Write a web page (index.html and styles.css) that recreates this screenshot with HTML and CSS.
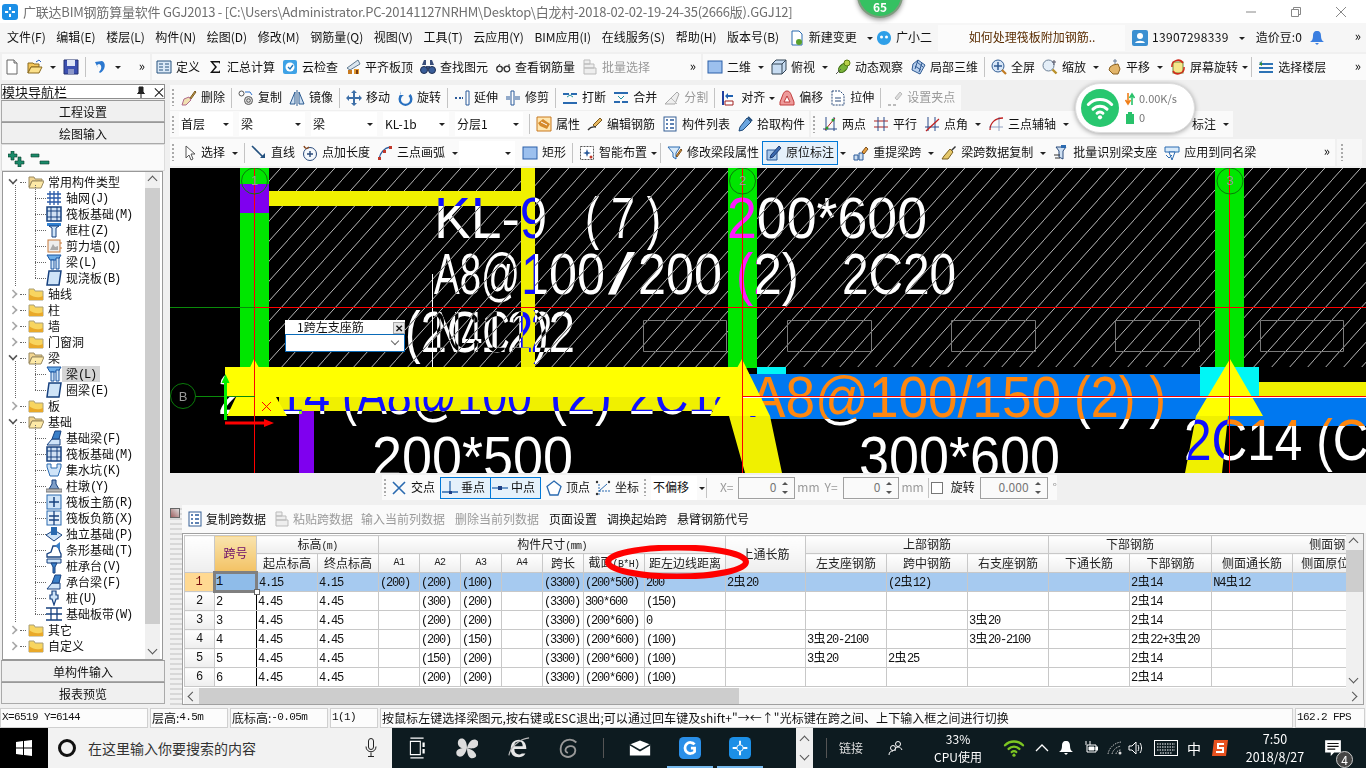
FILE: index.html
```html
<!DOCTYPE html>
<html lang="zh-CN">
<head>
<meta charset="utf-8">
<title>GGJ2013</title>
<link rel="stylesheet" href="styles.css">
</head>
<body>
<svg class="sprite" aria-hidden="true">
<defs>
<symbol id="new" viewBox="0 0 16 16"><path d="M3 1h7l3 3v11H3z" fill="#fff" stroke="#666"/><path d="M10 1v3h3" fill="#ddd" stroke="#666"/></symbol>
<symbol id="open" viewBox="0 0 16 16"><path d="M1 14V4h5l1 1h5v3H4z" fill="#f3c65a" stroke="#8a6a20"/><path d="M1 14l3-6h11l-3 6z" fill="#fbe08a" stroke="#8a6a20"/><path d="M9 3l3-2 2 2" fill="none" stroke="#2a62c0"/></symbol>
<symbol id="save" viewBox="0 0 16 16"><path d="M1 1h14v14H1z" fill="#3b4fb0" stroke="#23306f"/><path d="M4 1h8v6H4z" fill="#dfe6f6"/><path d="M5 10h6v5H5z" fill="#8c97c8"/></symbol>
<symbol id="undo" viewBox="0 0 16 16"><path d="M3 3l7-1c4 1 4 9-2 12l-1-1c3-3 3-7 0-8L5 6l1 3z" fill="#2b78d0"/></symbol>
<symbol id="def" viewBox="0 0 16 16"><path d="M1 2h14v12H1z" fill="#dbe9f7" stroke="#27537f"/><path d="M3 5h4M3 8h4M3 11h4M9 5h4M9 8h4M9 11h4" stroke="#27537f"/></symbol>
<symbol id="sigma" viewBox="0 0 16 16"><path d="M3 2h10v3l-1-1.500H6L10 8l-4 4.500h6L13 11v3H3l5-6z" fill="#111"/></symbol>
<symbol id="cloud" viewBox="0 0 16 16"><rect x="1" y="1" width="14" height="14" rx="2" fill="#3ea2e6"/><circle cx="8" cy="8" r="4.500" fill="#fff"/><path d="M6 8l2 2 3-4" fill="none" stroke="#2277bb" stroke-width="1.300"/></symbol>
<symbol id="flat" viewBox="0 0 16 16"><path d="M2 9L13 1l2 4L5 11z" fill="#dbe6ef" stroke="#607a90"/><path d="M3 11h4v4H3z" fill="#c87a20"/><path d="M9 10h5v5H9z" fill="#e09a30"/><path d="M11 11h2v4h-2z" fill="#7a3a10"/></symbol>
<symbol id="find" viewBox="0 0 16 16"><path d="M2 6l2-5h2v5zM14 6l-2-5h-2v5zM6 7h4v3H6z" fill="#3a4e7a"/><circle cx="4" cy="11" r="3.500" fill="#3a5e9a" stroke="#1e2e52"/><circle cx="12" cy="11" r="3.500" fill="#3a5e9a" stroke="#1e2e52"/></symbol>
<symbol id="glass" viewBox="0 0 16 16"><circle cx="4.500" cy="10" r="2.800" fill="none" stroke="#333" stroke-width="1.300"/><circle cx="12" cy="10" r="2.800" fill="none" stroke="#333" stroke-width="1.300"/><path d="M7 9h2M2 9l3-4M14 9V5" stroke="#333" fill="none"/></symbol>
<symbol id="batch" viewBox="0 0 16 16"><path d="M2 1h6v4H2zM2 5h10v4H2zM2 9h12v6H2z" fill="#eee" stroke="#bbb"/></symbol>
<symbol id="sq" viewBox="0 0 16 16"><rect x="1" y="2" width="14" height="12" fill="#9cc0ee" stroke="#2a5fa8"/></symbol>
<symbol id="box" viewBox="0 0 16 16"><path d="M1 5l4-4h10v10l-4 4H1z" fill="#c7dcf2" stroke="#345"/><path d="M1 5h10v10M11 5l4-4" fill="none" stroke="#345"/></symbol>
<symbol id="orbit" viewBox="0 0 16 16"><ellipse cx="8" cy="9" rx="3.500" ry="5.500" transform="rotate(45 8 9)" fill="#7ab33a" stroke="#3a6a10"/><circle cx="12" cy="4" r="3" fill="#b8cf4a" stroke="#5a7a10"/><path d="M1 15l5-5" stroke="#555"/></symbol>
<symbol id="local" viewBox="0 0 16 16"><path d="M3 5l5-4 7 5-5 9-8-4z" fill="#b7cfee" stroke="#2f5a92"/><path d="M7 3l6 5M5 7l6 4M8 1L5 10M12 4l-3 9" stroke="#2f5a92" fill="none"/></symbol>
<symbol id="fit" viewBox="0 0 16 16"><circle cx="7" cy="7" r="6" fill="#d7e6f7" stroke="#345f95"/><path d="M7 3v8M3 7h8" stroke="#2f5a92" stroke-width="1.500"/><path d="M11 11l4 4" stroke="#c07a20" stroke-width="2.200"/></symbol>
<symbol id="zoom" viewBox="0 0 16 16"><circle cx="6.500" cy="6.500" r="5.500" fill="#e4eef8" stroke="#6b7f96"/><path d="M10.500 10.500l4 4" stroke="#b8902a" stroke-width="2.400"/><path d="M12 1v5M10 3h4" stroke="#556"/></symbol>
<symbol id="pan" viewBox="0 0 16 16"><path d="M4 8l3-2 5-1 2 5-2 5H7L3 11z" fill="#e2b56a" stroke="#8a6020"/><path d="M9 0v5M7 2h4" stroke="#6a7c95"/></symbol>
<symbol id="rot" viewBox="0 0 16 16"><rect x="3" y="3" width="10" height="11" fill="#f6e68a" stroke="#6a8a3a"/><path d="M2 8a6 6 0 0 1 11-4M14 8a6 6 0 0 1-11 4" fill="none" stroke="#d02a1a" stroke-width="1.500"/></symbol>
<symbol id="floors" viewBox="0 0 16 16"><path d="M5 1L1 4h14v2H1zM1 8h14v2H1zM1 12h14v2H1z" fill="#2d73b5"/><path d="M4 3L1 5l3 2z" fill="#2c8a2c"/></symbol>
<symbol id="del" viewBox="0 0 16 16"><path d="M9 8l5-7 1 1-5 7z" fill="#c9a050" stroke="#7a5a20"/><path d="M3 9l5-2 2 3-5 5H1z" fill="#f0e0b0" stroke="#b06a8a"/></symbol>
<symbol id="copy" viewBox="0 0 16 16"><circle cx="3.500" cy="3.500" r="2.500" fill="none" stroke="#555"/><circle cx="10.500" cy="10.500" r="4" fill="#ddd" stroke="#555"/><circle cx="10.500" cy="10.500" r="1.800" fill="none" stroke="#555"/><path d="M7 2h5l2 3" fill="none" stroke="#2b6fc9"/></symbol>
<symbol id="mirror" viewBox="0 0 16 16"><path d="M1 14L6 2v12zM15 14L10 2v12z" fill="#cddff2" stroke="#2a5a90"/><path d="M8 0v16" stroke="#2a5a90"/></symbol>
<symbol id="move" viewBox="0 0 16 16"><path d="M8 0l3 3H9v4h4V5l3 3-3 3V9H9v4h2l-3 3-3-3h2V9H3v2L0 8l3-3v2h4V3H5z" fill="#3d6fa8"/></symbol>
<symbol id="spin" viewBox="0 0 16 16"><path d="M3 1v4h4L5.500 6a4.500 4.500 0 1 0 6 0l2-2a7 7 0 1 1-10 0z" fill="#2870c0"/></symbol>
<symbol id="ext" viewBox="0 0 16 16"><path d="M1 7h2v2H1zM5 7h2v2H5zM8 7h1v2H8z" fill="#2a5a9a"/><path d="M12 1h3v14h-3z" fill="#fff" stroke="#2a5a9a"/></symbol>
<symbol id="trim" viewBox="0 0 16 16"><path d="M6 1h3v14H6z" fill="#fff" stroke="#2a5a9a"/><path d="M1 7h4M10 7h5M1 9h4M10 9h5" stroke="#2a5a9a"/></symbol>
<symbol id="brk" viewBox="0 0 16 16"><path d="M1 3h6v2H1zM9 3h6v2H9zM1 12h14v2H1z" fill="#2a6ab0"/><path d="M5 7l3-2 3 2" fill="none" stroke="#1f8f9f"/></symbol>
<symbol id="mrg" viewBox="0 0 16 16"><path d="M1 2h14v2H1zM1 11h6v2H1zM9 11h6v2H9z" fill="#2a6ab0"/><path d="M5 6l3 3 3-3" fill="none" stroke="#1f8f9f"/></symbol>
<symbol id="spl" viewBox="0 0 16 16"><path d="M1 14L13 2l2 2-4 10z" fill="#eee" stroke="#aaa"/><path d="M7 8l6 6" stroke="#bbb"/></symbol>
<symbol id="aln" viewBox="0 0 16 16"><path d="M2 1v14" stroke="#2040a0" stroke-width="2"/><path d="M4 11h8v4H4z" fill="#fff" stroke="#a02020"/><path d="M4 6l3-3v2h5v2H7v2z" fill="#2060b0"/></symbol>
<symbol id="off" viewBox="0 0 16 16"><path d="M8 1c3 0 4 3 5 6l2 5v3H1v-3l2-5c1-3 2-6 5-6z" fill="#ee9a9a" stroke="#c03a3a"/><path d="M8 6l3 6H5z" fill="#fff" stroke="#c03a3a"/></symbol>
<symbol id="str" viewBox="0 0 16 16"><path d="M2 1h8l4 4v10H2z" fill="#fff" stroke="#2a4a7a" stroke-dasharray="2 1"/><path d="M5 8h6M5 11h6" stroke="#2a4a7a"/></symbol>
<symbol id="grip" viewBox="0 0 16 16"><path d="M8 8l5-6 2 2-5 6z" fill="#ddd" stroke="#bbb"/><path d="M1 14h3v2H1zM6 14h3v2H6z" fill="#bbb"/></symbol>
<symbol id="prop" viewBox="0 0 16 16"><path d="M1 1h14v14H1z" fill="#ffe6b0" stroke="#c8791e"/><path d="M2 7l5-4 7 5-3 5-7-3z" fill="#d58a2c"/><path d="M5 6l6 3" stroke="#fff"/></symbol>
<symbol id="edit" viewBox="0 0 16 16"><path d="M6 9l7-7 2 2-7 7z" fill="#e8b860" stroke="#7a5a20"/><path d="M1 14c3-4 5-3 8-3" fill="none" stroke="#333" stroke-width="1.300"/></symbol>
<symbol id="list" viewBox="0 0 16 16"><rect x="2" y="1" width="12" height="14" fill="#fff" stroke="#345f95"/><path d="M4 4h2M8 4h4M4 8h2M8 8h4M4 12h2M8 12h4" stroke="#2a5a9a" stroke-width="1.400"/></symbol>
<symbol id="pick" viewBox="0 0 16 16"><path d="M10 2l4 4-8 8-4 1 1-4z" fill="#6aa5e0" stroke="#1e4a7a"/><path d="M11 1l4 4" stroke="#1e4a7a" stroke-width="2"/></symbol>
<symbol id="two" viewBox="0 0 16 16"><path d="M1 13h14M4 1v14M12 1v14" stroke="#2a4a8a" fill="none"/><path d="M3 14L13 2" stroke="#b02020"/><circle cx="5" cy="12" r="1.500" fill="#2c9a2c"/><circle cx="11" cy="4" r="1.500" fill="#2c9a2c"/></symbol>
<symbol id="par" viewBox="0 0 16 16"><path d="M1 5h14M1 11h14" stroke="#b02020"/><path d="M5 1v14M11 1v14" stroke="#2a4a8a"/></symbol>
<symbol id="ang" viewBox="0 0 16 16"><path d="M1 11h14M4 1v14M11 1v14" stroke="#2a4a8a" fill="none"/><path d="M2 15L15 3" stroke="#c02020" stroke-width="1.300"/></symbol>
<symbol id="arc3" viewBox="0 0 16 16"><path d="M2 14C2 7 7 2 15 2" fill="none" stroke="#c02020" stroke-width="1.300"/><path d="M1 11h14M11 1v14" stroke="#2a4a8a" opacity=".5"/></symbol>
<symbol id="cur" viewBox="0 0 16 16"><path d="M5 1v12l3-3 2 5 2-1-2-5h4z" fill="#fff" stroke="#555"/></symbol>
<symbol id="lin" viewBox="0 0 16 16"><path d="M1 1l11 11" stroke="#24517f" stroke-width="1.600"/><path d="M9 13h5V8z" fill="#24517f"/></symbol>
<symbol id="plen" viewBox="0 0 16 16"><circle cx="8" cy="9" r="6.500" fill="#f4f8fc" stroke="#2a4a7a"/><path d="M8 6v6M5 9h6" stroke="#2a4a7a" stroke-width="1.400"/><path d="M2 1c1 3 3 3 5 1" fill="none" stroke="#8a4a20" stroke-width="1.500"/></symbol>
<symbol id="arc" viewBox="0 0 16 16"><path d="M2 14C3 8 7 3 13 2" fill="none" stroke="#2a5a9a" stroke-width="1.400"/><rect x="1" y="12" width="3" height="3" fill="#c0392b"/><rect x="6" y="5" width="3" height="3" fill="#c0392b"/><rect x="12" y="1" width="3" height="3" fill="#c0392b"/></symbol>
<symbol id="smart" viewBox="0 0 16 16"><rect x="1.500" y="1.500" width="13" height="13" fill="#fff" stroke="#555" stroke-dasharray="2 1"/><path d="M8 4l1 3 3 1-3 1-1 3-1-3-3-1 3-1z" fill="#2a5a9a"/><circle cx="12" cy="12" r="1.500" fill="#c0392b"/></symbol>
<symbol id="filt" viewBox="0 0 16 16"><path d="M1 2h12L9 8v6l-3-2V8z" fill="#d8eafa" stroke="#2a6ab0"/><path d="M9 11l5-7 1 1-5 7z" fill="#e8a040" stroke="#7a5020"/></symbol>
<symbol id="inpl" viewBox="0 0 16 16"><path d="M1 5h10v10H1z" fill="#a8c8ea" stroke="#2a5a9a"/><path d="M5 10l8-9 2 2-8 9-3 1z" fill="#3a6ab0" stroke="#1e3a70"/></symbol>
<symbol id="reex" viewBox="0 0 16 16"><path d="M1 15v-5h4v5zM6 15V8h4v7z" fill="#cfe0f2" stroke="#2a5a9a"/><path d="M9 7l4-5 2 2-4 5z" fill="#e8a040" stroke="#7a5020"/></symbol>
<symbol id="broom" viewBox="0 0 16 16"><path d="M10 5l4-4 1 1-4 4z" fill="#333"/><path d="M9 4l3 3-5 7H1l2-3z" fill="#e6c86a" stroke="#7a6020"/></symbol>
<symbol id="bid" viewBox="0 0 16 16"><path d="M3 2h10l-3 4v8l-4-2V6z" fill="#cfe0f2" stroke="#2a4a7a"/><path d="M1 10h6M2 13h5" stroke="#333"/><rect x="8" y="0" width="5" height="3" fill="#2a6ab0"/></symbol>
<symbol id="apl" viewBox="0 0 16 16"><path d="M1 2h14v5H1z" fill="#d8eafa" stroke="#2a6ab0"/><path d="M5 7h6l-3 8z" fill="#fff" stroke="#2a6ab0"/><path d="M2 10l3 3 3-3" fill="none" stroke="#2a6ab0"/></symbol>
<symbol id="xp" viewBox="0 0 16 16"><path d="M2 2l12 12M14 2L2 14" stroke="#2a6ab0" stroke-width="1.600"/></symbol>
<symbol id="perp" viewBox="0 0 16 16"><path d="M0 12h16M8 1v11" stroke="#2a6ab0" stroke-width="1.300"/><rect x="7" y="11" width="3" height="3" fill="#1e3f85"/></symbol>
<symbol id="midp" viewBox="0 0 16 16"><path d="M0 8h16" stroke="#2a6ab0" stroke-width="1.300"/><rect x="6" y="6" width="4" height="4" fill="#1e3f85"/></symbol>
<symbol id="vert" viewBox="0 0 16 16"><path d="M8 1l7 5.500-3 8.500H4L1 6.500z" fill="#fff" stroke="#2a6ab0" stroke-width="1.300"/></symbol>
<symbol id="crd" viewBox="0 0 16 16"><path d="M4 15V3M4 11h11" stroke="#2a6ab0" stroke-dasharray="2 1" fill="none"/><path d="M4 11l8-7" stroke="#2a6ab0"/><circle cx="2" cy="2" r="1.200" fill="#333"/><circle cx="14" cy="2" r="1.200" fill="#333"/><circle cx="2" cy="14" r="1.200" fill="#333"/></symbol>
<symbol id="doc" viewBox="0 0 16 16"><path d="M3 1h7l3 3v11H3z" fill="#fff" stroke="#2a6ab0"/><circle cx="10" cy="12" r="3" fill="#5aa02c"/></symbol>
<symbol id="bot" viewBox="0 0 16 16"><path d="M8 1c4 0 7 3 7 7 0 4-3 7-7 7s-7-3-7-7c0-4 3-7 7-7z" fill="#2f9fe8"/><circle cx="5.500" cy="7" r="1.500" fill="#fff"/><circle cx="10.500" cy="7" r="1.500" fill="#fff"/></symbol>
<symbol id="user" viewBox="0 0 16 16"><rect width="16" height="16" rx="2" fill="#3b8fd1"/><circle cx="8" cy="6" r="3" fill="#fff"/><path d="M3 13c1-3 9-3 10 0z" fill="#fff"/></symbol>
<symbol id="bell" viewBox="0 0 16 16"><path d="M8 1c3 0 4 2 4 5 0 3 1 5 3 6H1c2-1 3-3 3-6 0-3 1-5 4-5z" fill="#3a7ee0"/><path d="M6 13h4l-2 2z" fill="#3a7ee0"/></symbol>
<symbol id="fopen" viewBox="0 0 16 16"><path d="M1 13V3h5l1 2h7v2H4z" fill="#f2d590" stroke="#9a8a60"/><path d="M1 14l3-7h12l-3 7z" fill="#fde9a6" stroke="#9a8a60"/></symbol>
<symbol id="fold" viewBox="0 0 16 16"><path d="M1 3h5l1 2h8v9H1z" fill="#f8d560" stroke="#aaa078"/><path d="M1 8c5 4 10 4 14 2v4H1z" fill="#e9a92a"/></symbol>
<symbol id="tgrid" viewBox="0 0 16 16"><path d="M1 1h14v14H1z" fill="#fff"/><path d="M1 4h14M1 8h14M1 12h14M4 1v14M8 1v14M12 1v14" stroke="#2a5aa8" stroke-width="1.300"/></symbol>
<symbol id="traft" viewBox="0 0 16 16"><rect x="1" y="1" width="14" height="14" fill="#cfe0f2" stroke="#17417f" stroke-width="1.500"/><path d="M1 5h14M1 11h14M5 1v14M11 1v14" stroke="#17417f"/></symbol>
<symbol id="tcol" viewBox="0 0 16 16"><path d="M1 1h14v3H1z" fill="#2f7fd0"/><path d="M3 4h10l-3 2v9H6V6z" fill="#cfe4f8" stroke="#17417f"/></symbol>
<symbol id="twall" viewBox="0 0 16 16"><rect x="2" y="2" width="12" height="12" fill="#eee" stroke="#c87a3a"/><path d="M4 12l3-6 2 3 3-1v4z" fill="#aaa"/><path d="M14 5h2M14 10h2" stroke="#c87a3a"/></symbol>
<symbol id="tbeam" viewBox="0 0 16 16"><path d="M1 1h14l-3 5H4z" fill="#6eaee8" stroke="#1a55a0"/><path d="M5 6h3v9H5zM10 4h3v11h-3z" fill="#cfe4f8" stroke="#1a55a0"/></symbol>
<symbol id="tslab" viewBox="0 0 16 16"><path d="M3 1h12l-2 14H1z" fill="#cfe4f8" stroke="#17417f" stroke-width="1.500"/></symbol>
<symbol id="tfb" viewBox="0 0 16 16"><path d="M1 15l5-6h8v6z" fill="#cfe4f8" stroke="#17417f"/><path d="M6 9l3-8h6l-2 8z" fill="#3a7fc8" stroke="#17417f"/></symbol>
<symbol id="tpit" viewBox="0 0 16 16"><path d="M1 2h4v4h6V2h4v3l-3 9H4L1 5z" fill="#cfe4f8" stroke="#2a6ab0"/></symbol>
<symbol id="tcap" viewBox="0 0 16 16"><path d="M6 2h4v4l3 5H3l3-5z" fill="#7f9fc8" stroke="#17417f"/><path d="M0 11h16v3H0z" fill="#bbb" stroke="#777"/></symbol>
<symbol id="tmain" viewBox="0 0 16 16"><rect x="1" y="1" width="14" height="14" fill="#cfe4f8" stroke="#2a6ab0"/><path d="M8 3v10M3 8h10" stroke="#17417f" stroke-width="1.500"/></symbol>
<symbol id="tneg" viewBox="0 0 16 16"><rect x="1" y="1" width="14" height="14" fill="#e6f0fa" stroke="#2a6ab0"/><path d="M8 1v14M3 6h10M3 10h10" stroke="#17417f" stroke-width="1.300"/></symbol>
<symbol id="tind" viewBox="0 0 16 16"><path d="M0 9l8-5 8 5-8 6z" fill="#cfe4f8" stroke="#17417f"/><path d="M5 1h6v8H5z" fill="#2a6ab0"/></symbol>
<symbol id="tstrip" viewBox="0 0 16 16"><path d="M1 15v-3l4-2 2-6h5l2 6 1 2v3z" fill="#fff" stroke="#17417f" stroke-width="1.300"/><path d="M9 4l5-4v8z" fill="#3a7fc8"/></symbol>
<symbol id="tpc" viewBox="0 0 16 16"><path d="M1 1h14v4H1z" fill="#cfe4f8" stroke="#17417f"/><path d="M5 5h6l-2 4v6H7V9z" fill="#3a7fc8" stroke="#17417f"/></symbol>
<symbol id="tpile" viewBox="0 0 16 16"><path d="M6 1h4v4h2v4h-2l-2 6-2-6H4V5h2z" fill="#cfe4f8" stroke="#17417f" stroke-width="1.200"/></symbol>
<symbol id="tband" viewBox="0 0 16 16"><path d="M0 2h16M0 14h16M5 2v12M11 2v12M0 8h16" stroke="#17417f" stroke-width="1.300"/></symbol>
<symbol id="wifi" viewBox="0 0 24 20"><path d="M2 7a14 14 0 0 1 20 0M6 11a8.500 8.500 0 0 1 12 0M9.500 14.500a3.500 3.500 0 0 1 5 0" fill="none" stroke="currentColor" stroke-width="2.600" stroke-linecap="round"/><circle cx="12" cy="18" r="1.800" fill="currentColor"/></symbol>
</defs>
</svg>

<div class="app">
  <header class="title">
    <svg class="ti-logo" viewBox="0 0 16 16"><rect width="16" height="16" rx="3" fill="#1c8fe6"/><path d="M8 3v10M3 8h10" stroke="#fff" stroke-width="2"/><circle cx="8" cy="8" r="2" fill="#1c8fe6"/></svg>
    <span class="ti-text">广联达BIM钢筋算量软件 GGJ2013 - [C:\Users\Administrator.PC-20141127NRHM\Desktop\白龙村-2018-02-02-19-24-35(2666版).GGJ12]</span>
    <div class="win">
      <svg viewBox="0 0 12 12"><path d="M1 6h10" stroke="#888"/></svg>
      <svg viewBox="0 0 12 12"><path d="M1.500 3.500h7v7h-7zM3.500 3.500v-2h7v7h-2" fill="none" stroke="#888"/></svg>
      <svg viewBox="0 0 12 12"><path d="M1 1l10 10M11 1L1 11" stroke="#888"/></svg>
    </div>
  </header>

  <nav class="menu">
    <span>文件(F)</span><span>编辑(E)</span><span>楼层(L)</span><span>构件(N)</span><span>绘图(D)</span><span>修改(M)</span><span>钢筋量(Q)</span><span>视图(V)</span><span>工具(T)</span><span>云应用(Y)</span><span>BIM应用(I)</span><span>在线服务(S)</span><span>帮助(H)</span><span>版本号(B)</span>
    <span class="it mg"><svg class="i"><use href="#doc"/></svg>新建变更</span><i class="car"></i>
    <span class="it mg bot"><svg class="i"><use href="#bot"/></svg>广小二</span>
    <span class="news">如何处理筏板附加钢筋..</span>
    <span class="it mg acct"><svg class="i"><use href="#user"/></svg>13907298339</span><i class="car"></i>
    <span>造价豆:0</span>
    <svg class="i bell"><use href="#bell"/></svg>
    <span class="more">»</span>
  </nav>

  <div class="bar1">
    <div class="tb g1">
      <svg class="i"><use href="#new"/></svg><svg class="i"><use href="#open"/></svg><i class="car"></i><svg class="i"><use href="#save"/></svg><b class="sep"></b><svg class="i"><use href="#undo"/></svg><i class="car"></i><span class="more">»</span>
    </div>
    <div class="tb g2">
      <span class="it"><svg class="i"><use href="#def"/></svg>定义</span>
      <span class="it"><svg class="i"><use href="#sigma"/></svg>汇总计算</span>
      <span class="it"><svg class="i"><use href="#cloud"/></svg>云检查</span>
      <span class="it"><svg class="i"><use href="#flat"/></svg>平齐板顶</span>
      <span class="it"><svg class="i"><use href="#find"/></svg>查找图元</span>
      <span class="it"><svg class="i"><use href="#glass"/></svg>查看钢筋量</span>
      <span class="it off"><svg class="i"><use href="#batch"/></svg>批量选择</span>
      <span class="more">»</span>
    </div>
    <div class="tb g3">
      <span class="it"><svg class="i"><use href="#sq"/></svg>二维</span><i class="car"></i>
      <span class="it"><svg class="i"><use href="#box"/></svg>俯视</span><i class="car"></i>
      <span class="it"><svg class="i"><use href="#orbit"/></svg>动态观察</span>
      <span class="it"><svg class="i"><use href="#local"/></svg>局部三维</span><b class="sep"></b>
      <span class="it"><svg class="i"><use href="#fit"/></svg>全屏</span>
      <span class="it"><svg class="i"><use href="#zoom"/></svg>缩放</span><i class="car"></i>
      <span class="it"><svg class="i"><use href="#pan"/></svg>平移</span><i class="car"></i>
      <span class="it"><svg class="i"><use href="#rot"/></svg>屏幕旋转</span><i class="car tight"></i><b class="sep"></b>
      <span class="it"><svg class="i"><use href="#floors"/></svg>选择楼层</span>
      <span class="more">»</span>
    </div>
  </div>

  <div class="main">
    <aside class="side">
      <div class="side-h"><span>模块导航栏</span>
        <svg class="side-pin" viewBox="0 0 10 12"><path d="M3 1h4v5l1.500 1.500h-7L3 6zM5 8v4" fill="#222" stroke="#222"/></svg>
        <span class="side-x">×</span></div>
      <button class="nav" type="button">工程设置</button>
      <button class="nav" type="button">绘图输入</button>
      <div class="pm"><svg viewBox="0 0 42 16"><path d="M3 0h3v3h3v3H6v3H3V6H0V3h3z" fill="#1b8a6a" stroke="#0a3a2a" stroke-width=".6"/><path d="M10 6h3v4h3v3h-3v3h-3v-3H7v-3h3z" fill="#1b8a6a" stroke="#0a3a2a" stroke-width=".6"/><path d="M23 3h8v3h-8zM32 10h9v3h-9z" fill="#1b8a6a" stroke="#0a3a2a" stroke-width=".6"/></svg></div>
      <div class="tree">
        <div class="tree-body">
          <div class="r f"><i class="chev dn"></i><i class="dot"></i><svg class="i"><use href="#fopen"/></svg>常用构件类型</div>
          <div class="kids">
            <div class="r k"><svg class="i"><use href="#tgrid"/></svg>轴网<span class="m">(J)</span></div>
            <div class="r k"><svg class="i"><use href="#traft"/></svg>筏板基础<span class="m">(M)</span></div>
            <div class="r k"><svg class="i"><use href="#tcol"/></svg>框柱<span class="m">(Z)</span></div>
            <div class="r k"><svg class="i"><use href="#twall"/></svg>剪力墙<span class="m">(Q)</span></div>
            <div class="r k"><svg class="i"><use href="#tbeam"/></svg>梁<span class="m">(L)</span></div>
            <div class="r k"><svg class="i"><use href="#tslab"/></svg>现浇板<span class="m">(B)</span></div>
          </div>
          <div class="r f"><i class="chev"></i><i class="dot"></i><svg class="i"><use href="#fold"/></svg>轴线</div>
          <div class="r f"><i class="chev"></i><i class="dot"></i><svg class="i"><use href="#fold"/></svg>柱</div>
          <div class="r f"><i class="chev"></i><i class="dot"></i><svg class="i"><use href="#fold"/></svg>墙</div>
          <div class="r f"><i class="chev"></i><i class="dot"></i><svg class="i"><use href="#fold"/></svg>门窗洞</div>
          <div class="r f"><i class="chev dn"></i><i class="dot"></i><svg class="i"><use href="#fopen"/></svg>梁</div>
          <div class="kids">
            <div class="r k"><svg class="i"><use href="#tbeam"/></svg><span class="hl">梁<span class="m">(L)</span></span></div>
            <div class="r k"><svg class="i"><use href="#tslab"/></svg>圈梁<span class="m">(E)</span></div>
          </div>
          <div class="r f"><i class="chev"></i><i class="dot"></i><svg class="i"><use href="#fold"/></svg>板</div>
          <div class="r f"><i class="chev dn"></i><i class="dot"></i><svg class="i"><use href="#fopen"/></svg>基础</div>
          <div class="kids">
            <div class="r k"><svg class="i"><use href="#tfb"/></svg>基础梁<span class="m">(F)</span></div>
            <div class="r k"><svg class="i"><use href="#traft"/></svg>筏板基础<span class="m">(M)</span></div>
            <div class="r k"><svg class="i"><use href="#tpit"/></svg>集水坑<span class="m">(K)</span></div>
            <div class="r k"><svg class="i"><use href="#tcap"/></svg>柱墩<span class="m">(Y)</span></div>
            <div class="r k"><svg class="i"><use href="#tmain"/></svg>筏板主筋<span class="m">(R)</span></div>
            <div class="r k"><svg class="i"><use href="#tneg"/></svg>筏板负筋<span class="m">(X)</span></div>
            <div class="r k"><svg class="i"><use href="#tind"/></svg>独立基础<span class="m">(P)</span></div>
            <div class="r k"><svg class="i"><use href="#tstrip"/></svg>条形基础<span class="m">(T)</span></div>
            <div class="r k"><svg class="i"><use href="#tpc"/></svg>桩承台<span class="m">(V)</span></div>
            <div class="r k"><svg class="i"><use href="#tfb"/></svg>承台梁<span class="m">(F)</span></div>
            <div class="r k"><svg class="i"><use href="#tpile"/></svg>桩<span class="m">(U)</span></div>
            <div class="r k"><svg class="i"><use href="#tband"/></svg>基础板带<span class="m">(W)</span></div>
          </div>
          <div class="r f"><i class="chev"></i><i class="dot"></i><svg class="i"><use href="#fold"/></svg>其它</div>
          <div class="r f"><i class="chev"></i><i class="dot"></i><svg class="i"><use href="#fold"/></svg>自定义</div>
        </div>
        <div class="tree-sb"><span class="ar up"></span><span class="thumb"></span><span class="ar down"></span></div>
      </div>
      <button class="nav" type="button">单构件输入</button>
      <button class="nav" type="button">报表预览</button>
    </aside>

    <section class="work">
      <div class="row r2">
        <div class="tb fill1">
          <i class="grp"></i>
          <span class="it"><svg class="i"><use href="#del"/></svg>删除</span><b class="sep"></b>
          <span class="it"><svg class="i"><use href="#copy"/></svg>复制</span>
          <span class="it"><svg class="i"><use href="#mirror"/></svg>镜像</span><b class="sep"></b>
          <span class="it"><svg class="i"><use href="#move"/></svg>移动</span>
          <span class="it"><svg class="i"><use href="#spin"/></svg>旋转</span><b class="sep"></b>
          <span class="it"><svg class="i"><use href="#ext"/></svg>延伸</span>
          <span class="it"><svg class="i"><use href="#trim"/></svg>修剪</span><b class="sep"></b>
          <span class="it"><svg class="i"><use href="#brk"/></svg>打断</span>
          <span class="it"><svg class="i"><use href="#mrg"/></svg>合并</span>
          <span class="it off"><svg class="i"><use href="#spl"/></svg>分割</span><b class="sep"></b>
          <span class="it"><svg class="i"><use href="#aln"/></svg>对齐</span><i class="car tight"></i>
          <span class="it"><svg class="i"><use href="#off"/></svg>偏移</span>
          <span class="it"><svg class="i"><use href="#str"/></svg>拉伸</span><b class="sep"></b>
          <span class="it off"><svg class="i"><use href="#grip"/></svg>设置夹点</span>
        </div>
      </div>
      <div class="row r3">
        <div class="tb t3a">
          <i class="grp"></i>
          <div class="sels">
            <span class="sel w54">首层<i class="car"></i></span>
            <span class="sel w66">梁<i class="car"></i></span>
            <span class="sel w66">梁<i class="car"></i></span>
            <span class="sel w66">KL-1b<i class="car"></i></span>
            <span class="sel w68">分层1<i class="car"></i></span>
          </div>
          <b class="sep"></b>
          <span class="it"><svg class="i"><use href="#prop"/></svg>属性</span>
          <span class="it"><svg class="i"><use href="#edit"/></svg>编辑钢筋</span>
          <span class="it"><svg class="i"><use href="#list"/></svg>构件列表</span>
          <span class="it"><svg class="i"><use href="#pick"/></svg>拾取构件</span>
        </div>
        <div class="tb t3b">
          <i class="grp"></i>
          <span class="it"><svg class="i"><use href="#two"/></svg>两点</span>
          <span class="it"><svg class="i"><use href="#par"/></svg>平行</span>
          <span class="it"><svg class="i"><use href="#ang"/></svg>点角</span><i class="car"></i>
          <span class="it"><svg class="i"><use href="#arc3"/></svg>三点辅轴</span><i class="car"></i>
          <span class="gap84"></span>
          <span>标注</span><i class="car"></i>
        </div>
      </div>
      <div class="row r4">
        <div class="tb t4a">
          <i class="grp"></i>
          <span class="it"><svg class="i"><use href="#cur"/></svg>选择</span><i class="car"></i><b class="sep"></b>
          <span class="it"><svg class="i"><use href="#lin"/></svg>直线</span>
          <span class="it"><svg class="i"><use href="#plen"/></svg>点加长度</span>
          <span class="it"><svg class="i"><use href="#arc"/></svg>三点画弧</span><i class="car"></i>
          <span class="blank"><i class="car"></i></span>
          <span class="it"><svg class="i"><use href="#sq"/></svg>矩形</span><b class="sep"></b>
          <span class="it"><svg class="i"><use href="#smart"/></svg>智能布置</span><i class="car tight"></i><b class="sep"></b>
          <span class="it"><svg class="i"><use href="#filt"/></svg>修改梁段属性</span>
          <span class="it act"><svg class="i"><use href="#inpl"/></svg>原位标注</span><i class="car pull"></i>
          <span class="it"><svg class="i"><use href="#reex"/></svg>重提梁跨</span><i class="car"></i>
          <span class="it"><svg class="i"><use href="#broom"/></svg>梁跨数据复制</span><i class="car"></i>
          <span class="it"><svg class="i"><use href="#bid"/></svg>批量识别梁支座</span>
          <span class="it"><svg class="i"><use href="#apl"/></svg>应用到同名梁</span>
          <span class="more">»</span>
        </div>
        <div class="tb t4b"><i class="grp"></i></div>
      </div>

      <div class="canvas">
        <svg class="cad" viewBox="170 168 1196 305">
          <defs>
            <pattern id="hatch" width="18" height="20" patternUnits="userSpaceOnUse"><path d="M-1 21L19 -1" stroke="#e8e8e8" stroke-width=".8"/></pattern>
          </defs>
          <rect class="k0" x="170" y="168" width="1196" height="305"/>
          <rect class="hat" x="269" y="168" width="1097" height="199"/>
          <path class="ghost" d="M643.500 320.500h83v31h-83zM787.500 320.500h84v31h-84zM951.500 320.500h84v31h-84zM1115.500 320.500h84v31h-84zM1260.500 320.500h83v31h-83z"/>
          <rect class="y2" x="521" y="168" width="14" height="200"/>
          <rect class="y2" x="269" y="191" width="252" height="15"/>
          <rect class="gr" x="240" y="168" width="29" height="200"/>
          <rect class="pu" x="240" y="184" width="29" height="29"/>
          <rect class="gr" x="728" y="168" width="29" height="200"/>
          <rect class="gr" x="1215" y="168" width="29" height="200"/>
          <rect class="cy" x="757" y="367" width="29" height="7"/>
          <rect class="cy" x="1200" y="367" width="59" height="30"/>
          <rect class="bl" x="745" y="374" width="455" height="45"/>
          <rect class="bl" x="1200" y="397" width="166" height="29"/>
          <rect class="y2" x="1259" y="382" width="107" height="15"/>
          <rect class="bl" x="225" y="367" width="30" height="30"/>
          <rect class="pu" x="299" y="411" width="15" height="62"/>
          <rect class="pu" x="507" y="397" width="26" height="14"/>
          <rect class="y2" x="279" y="397" width="442" height="14"/>
          <path class="y2" d="M729 416h41l12 57h-37zM1196 416h32l-6 57h-37z"/>
          <text class="dx" x="434" y="238" textLength="86" lengthAdjust="spacingAndGlyphs">KL-</text>
          <text class="dx" x="520" y="238" textLength="27" lengthAdjust="spacingAndGlyphs">9</text>
          <text class="dx" x="585" y="238" textLength="76" lengthAdjust="spacingAndGlyphs">( 7 )</text>
          <text class="dx" x="727" y="238" textLength="200" lengthAdjust="spacingAndGlyphs">200*600</text>
          <text class="dx" x="434" y="294" textLength="86" lengthAdjust="spacingAndGlyphs">A8@</text>
          <text class="dx" x="521" y="294" textLength="84" lengthAdjust="spacingAndGlyphs">100</text>
          <text class="dx" x="608" y="294" textLength="27" lengthAdjust="spacingAndGlyphs">/</text>
          <text class="dx" x="638" y="294" textLength="84" lengthAdjust="spacingAndGlyphs">200</text>
          <text class="dx" x="736" y="294" textLength="63" lengthAdjust="spacingAndGlyphs">(2)</text>
          <text class="dx" x="842" y="294" textLength="114" lengthAdjust="spacingAndGlyphs">2C20</text>
          <text class="dx" x="405" y="352" textLength="170" lengthAdjust="spacingAndGlyphs">(2C12)2</text>
          <text class="dx" x="434" y="352" textLength="118" lengthAdjust="spacingAndGlyphs">N4C12</text>
          <text class="dx" x="218" y="414" textLength="112" lengthAdjust="spacingAndGlyphs">2C14</text>
          <text class="dx" x="342" y="414" textLength="190" lengthAdjust="spacingAndGlyphs">(A8@100</text>
          <text class="dx" x="550" y="414" textLength="62" lengthAdjust="spacingAndGlyphs">(2)</text>
          <text class="dx" x="629" y="414" textLength="111" lengthAdjust="spacingAndGlyphs">2C14</text>
          <text class="dx" x="750" y="417" textLength="311" lengthAdjust="spacingAndGlyphs">A8@100/150</text>
          <text class="dx" x="1074" y="417" textLength="92" lengthAdjust="spacingAndGlyphs">(2) )</text>
          <text class="dx" x="372" y="477" textLength="201" lengthAdjust="spacingAndGlyphs">200*500</text>
          <text class="dx" x="859" y="477" textLength="201" lengthAdjust="spacingAndGlyphs">300*600</text>
          <text class="dx" x="1184" y="460" textLength="212" lengthAdjust="spacingAndGlyphs">2C14 (C8</text>
          <rect class="y1" x="225" y="367" width="517" height="30"/>
          <path class="y1" d="M254 359l33 57h-60zM742 359l28 57h-60zM1230 359l33 57h-67z"/>
          <path class="wh" d="M432.500 274v93M742 397.500h624"/>
          <path class="red" d="M255 307.500h1111M742 396.500h624M254.500 168v305M742.500 168v305M1229.500 168v305M262 402l9 9M271 402l-9 9"/>
          <path class="dg" d="M170 307.500h85M195 396.500h60"/>
          <circle class="axis" cx="254.500" cy="181" r="13"/>
          <circle class="axis" cx="742.500" cy="181" r="13"/>
          <circle class="axis" cx="1230" cy="181" r="13"/>
          <circle class="axis" cx="183" cy="396" r="12.500"/>
          <text class="lab" x="254.500" y="185">1</text>
          <text class="lab" x="742.500" y="185">2</text>
          <text class="lab" x="1230" y="185">3</text>
          <text class="lab" x="183" y="401">B</text>
          <path class="arg" d="M225.500 381v39"/><path class="agf" d="M225.500 374l4 9h-8z"/>
          <path class="arr" d="M225 423h40"/><path class="arf" d="M274 423l-10-4v8z"/>
        </svg>
        <div class="pop">
          <div class="pop-t"><span>1跨左支座筋</span><i class="pop-x">✕</i></div>
          <div class="pop-i"><i class="pop-c"></i></div>
        </div>
      </div>

      <div class="snapwrap">
        <div class="tb snap">
          <i class="grp"></i>
          <span class="it"><svg class="i"><use href="#xp"/></svg>交点</span>
          <div class="pair">
            <span class="it pr"><svg class="i"><use href="#perp"/></svg>垂点</span>
            <span class="it pr"><svg class="i"><use href="#midp"/></svg>中点</span>
          </div>
          <span class="it"><svg class="i"><use href="#vert"/></svg>顶点</span>
          <span class="it"><svg class="i"><use href="#crd"/></svg>坐标</span>
          <i class="grp"></i>
          <span class="sel w46">不偏移</span><i class="car tight"></i><b class="sep"></b>
          <span class="off xl">X=</span><span class="num w57">0<i class="spin"></i></span><span class="off mm">mm</span>
          <span class="off">Y=</span><span class="num w57">0<i class="spin"></i></span><span class="off mm">mm</span><b class="sep"></b>
          <i class="chk"></i><span class="rt">旋转</span><span class="num w68">0.000<i class="spin"></i></span><span class="off">°</span>
        </div>
      </div>

      <div class="lower">
        <div class="gripcol"><i class="gx"></i></div>
        <div class="lowmain">
          <div class="gtb">
            <span class="it"><svg class="i"><use href="#list"/></svg>复制跨数据</span>
            <span class="it off"><svg class="i"><use href="#batch"/></svg>粘贴跨数据</span>
            <span class="off">输入当前列数据</span>
            <span class="off">删除当前列数据</span>
            <span>页面设置</span>
            <span>调换起始跨</span>
            <span>悬臂钢筋代号</span>
          </div>
          <div class="frame">
            <div class="fr-top">
              <div class="view">
                <table class="grid">
                  <colgroup>
                    <col class="c30"><col class="c42"><col class="c61"><col class="c61"><col class="c41"><col class="c41"><col class="c41"><col class="c41"><col class="c41"><col class="c61"><col class="c81"><col class="c80"><col class="c81"><col class="c81"><col class="c81"><col class="c81"><col class="c82"><col class="c81"><col class="c81"><col class="c81">
                  </colgroup>
                  <thead>
                    <tr class="h1">
                      <th rowspan="2"></th><th rowspan="2" class="gold">跨号</th>
                      <th colspan="2">标高<span class="m">(m)</span></th>
                      <th colspan="7">构件尺寸<span class="m">(mm)</span></th>
                      <th rowspan="2">上通长筋</th>
                      <th colspan="3">上部钢筋</th>
                      <th colspan="2">下部钢筋</th>
                      <th colspan="3">侧面钢筋</th>
                    </tr>
                    <tr class="h2">
                      <th>起点标高</th><th>终点标高</th>
                      <th class="m">A1</th><th class="m">A2</th><th class="m">A3</th><th class="m">A4</th>
                      <th>跨长</th><th>截面<span class="m">(B*H)</span></th><th>距左边线距离</th>
                      <th>左支座钢筋</th><th>跨中钢筋</th><th>右支座钢筋</th>
                      <th>下通长筋</th><th>下部钢筋</th>
                      <th>侧面通长筋</th><th class="lft">侧面原位标注筋</th><th>拉筋</th>
                    </tr>
                  </thead>
                  <tbody>
                    <tr class="sel-row"><th>1</th><td class="first"><i class="hdl"></i>1</td><td>4.15</td><td>4.15</td><td>(200)</td><td>(200)</td><td>(100)</td><td></td><td>(3300)</td><td>(200*500)</td><td>200</td><td>2<u>虫</u>20</td><td></td><td>(2<u>虫</u>12)</td><td></td><td></td><td>2<u>虫</u>14</td><td>N4<u>虫</u>12</td><td></td><td></td></tr>
                    <tr><th>2</th><td class="sp">2</td><td>4.45</td><td>4.45</td><td></td><td>(300)</td><td>(200)</td><td></td><td>(3300)</td><td>300*600</td><td>(150)</td><td></td><td></td><td></td><td></td><td></td><td>2<u>虫</u>14</td><td></td><td></td><td></td></tr>
                    <tr><th>3</th><td class="sp">3</td><td>4.45</td><td>4.45</td><td></td><td>(200)</td><td>(200)</td><td></td><td>(3300)</td><td>(200*600)</td><td>0</td><td></td><td></td><td></td><td>3<u>虫</u>20</td><td></td><td>2<u>虫</u>14</td><td></td><td></td><td></td></tr>
                    <tr><th>4</th><td class="sp">4</td><td>4.45</td><td>4.45</td><td></td><td>(200)</td><td>(150)</td><td></td><td>(3300)</td><td>(200*600)</td><td>(100)</td><td></td><td>3<u>虫</u>20-2100</td><td></td><td>3<u>虫</u>20-2100</td><td></td><td>2<u>虫</u>22+3<u>虫</u>20</td><td></td><td></td><td></td></tr>
                    <tr><th>5</th><td class="sp">5</td><td>4.45</td><td>4.45</td><td></td><td>(150)</td><td>(200)</td><td></td><td>(3300)</td><td>(200*600)</td><td>(100)</td><td></td><td>3<u>虫</u>20</td><td>2<u>虫</u>25</td><td></td><td></td><td>2<u>虫</u>14</td><td></td><td></td><td></td></tr>
                    <tr><th>6</th><td class="sp">6</td><td>4.45</td><td>4.45</td><td></td><td>(200)</td><td>(200)</td><td></td><td>(3300)</td><td>(200*600)</td><td>(100)</td><td></td><td></td><td></td><td></td><td></td><td>2<u>虫</u>14</td><td></td><td></td><td></td></tr>
                  </tbody>
                </table>
              </div>
              <div class="vsb"><span class="ar up"></span><span class="vthumb"></span><span class="ar down"></span></div>
            </div>
            <div class="hsb"><span class="ar lf"></span><span class="hthumb"></span><span class="ar rt"></span></div>
            <svg class="oval" viewBox="0 0 146 34"><ellipse cx="73" cy="17" rx="69" ry="14.500"/></svg>
          </div>
        </div>
      </div>
    </section>
  </div>

  <footer class="status">
    <span class="st w148 m">X=6519 Y=6144</span>
    <span class="st w78">层高:<span class="m">4.5m</span></span>
    <span class="st w98">底标高:<span class="m">-0.05m</span></span>
    <span class="st w48 m">1(1)</span>
    <span class="st hint">按鼠标左键选择梁图元,按右键或ESC退出;可以通过回车键及shift+"→←↑"光标键在跨之间、上下输入框之间进行切换</span>
    <span class="st fps m">162.2 FPS</span>
  </footer>

  <div class="taskbar">
    <div class="start"><svg viewBox="0 0 16 16"><path d="M0 2l7-1v6.500H0zM8 .9L16 0v7.500H8zM0 8.500h7V15l-7-1zM8 8.500h8V16l-8-1.100z" fill="#fff"/></svg></div>
    <div class="search"><i class="cort"></i><span>在这里输入你要搜索的内容</span>
      <svg class="mic" viewBox="0 0 12 20"><rect x="3.500" y="1" width="5" height="11" rx="2.500" fill="none" stroke="#222"/><path d="M1 9c0 7 10 7 10 0M6 15v4M3 19h6" fill="none" stroke="#222"/></svg>
    </div>
    <div class="cell"><svg viewBox="0 0 16 20"><path d="M2 1h12M2 19h12" stroke="#fff"/><path d="M2 4h9v12H2z" fill="none" stroke="#fff"/><path d="M13 5h2v4h-2zM13 11h2v4h-2z" fill="#fff"/></svg></div>
    <div class="cell"><svg viewBox="0 0 24 24"><path d="M12 12C4 14 0 8 3 3c3-3 9-2 9 9zM12 12c2-8 8-12 12-7 1 4-1 9-12 7zM12 12c8 2 12 8 9 10-4 3-9 1-9-10zM12 12c-2 8-7 12-11 8-2-4 0-9 11-8z" fill="#ddd"/></svg></div>
    <div class="cell c2"><svg viewBox="0 0 24 24"><path d="M3 13h17c0-6-3-10-8-10-6 0-9 4-9 10 0 6 3 9 9 9 4 0 6-2 7-4h-4c-1 1-2 1-3 1-3 0-5-2-5-5h0V9c0-3 2-4 5-4s4 2 4 5H7" fill="#e8e8e8"/><path d="M1 20C2 12 12 2 23 1" fill="none" stroke="#bbb" stroke-width="1.300"/></svg></div>
    <div class="cell"><svg viewBox="0 0 24 24"><path d="M20 6C14 0 4 3 3 12s8 12 13 8 3-11-3-10-6 7-2 7" fill="none" stroke="#999" stroke-width="2"/></svg></div>
    <b class="tsep"></b>
    <div class="cell"><svg viewBox="0 0 26 20"><path d="M1 6l12-5 12 5v13H1z" fill="#fff"/><path d="M1 6l12 7 12-7" fill="none" stroke="#0f1f24" stroke-width="2"/></svg></div>
    <div class="cell on"><svg viewBox="0 0 24 24"><rect width="24" height="24" rx="5" fill="#2a8fe8"/><path d="M17 8a6 6 0 1 0 0 8v-4h-4" fill="none" stroke="#fff" stroke-width="3"/></svg></div>
    <div class="cell on"><svg viewBox="0 0 24 24"><rect width="24" height="24" rx="5" fill="#1c8fe6"/><path d="M12 4v16M4 12h16" stroke="#fff" stroke-width="2"/><circle cx="12" cy="12" r="3.500" fill="#1c8fe6" stroke="#fff"/></svg></div>
    <div class="tpanel"><span class="ar up"></span><span class="ar down"></span></div>
    <b class="tsep s2"></b>
    <span class="tc w48 dim">链接</span>
    <div class="tc w40"><svg class="t16" viewBox="0 0 16 16"><circle cx="6" cy="8" r="2.500" fill="none" stroke="#fff"/><circle cx="11" cy="4" r="2.500" fill="none" stroke="#fff"/><path d="M2 15c0-3 2-4 4-4M8 11c0-2 1-4 3-4 2 0 3 1 4 3" fill="none" stroke="#fff"/></svg></div>
    <div class="tc w86 cpu"><span>33%</span><span>CPU使用</span></div>
    <div class="tc w26 lime"><svg class="t22"><use href="#wifi"/></svg></div>
    <div class="tc w30"><svg class="t16" viewBox="0 0 16 16"><path d="M2 11l6-6 6 6" fill="none" stroke="#fff" stroke-width="1.300"/></svg></div>
    <div class="tc w18"><svg class="t16" viewBox="0 0 16 16"><path d="M8 1c3 0 4 2 4 5 0 3 1 5 3 6H1c2-1 3-3 3-6 0-3 1-5 4-5zM6 13h4l-2 2z" fill="#fff"/></svg></div>
    <div class="tc w30"><svg class="t16" viewBox="0 0 16 16"><path d="M5 5h9v7H5z" fill="none" stroke="#fff"/><path d="M7 7h5v3H7zM14 7h2v3h-2zM4 1v4M8 1v4" stroke="#fff" fill="#fff"/></svg></div>
    <div class="tc w20"><svg class="t16" viewBox="0 0 16 16"><path d="M1 14C2 8 7 3 14 2M5 14c1-4 4-7 9-8M9 14c0-2 2-4 5-4" fill="none" stroke="#bbb" stroke-dasharray="1.500 1"/><circle cx="13" cy="13" r="1.500" fill="#ddd"/></svg></div>
    <div class="tc w22"><svg class="t16" viewBox="0 0 16 16"><path d="M1 6h3l4-4v12l-4-4H1z" fill="none" stroke="#fff"/><path d="M10 5c1 2 1 4 0 6M12 3c2 3 2 7 0 10" fill="none" stroke="#fff"/></svg></div>
    <div class="tc w38"><svg class="kb" viewBox="0 0 24 16"><rect x=".5" y=".5" width="23" height="15" fill="none" stroke="#fff"/><path d="M3 4h18M3 7h18M3 10h18M6 13h12" stroke="#fff" stroke-dasharray="1.500 1"/></svg></div>
    <span class="tc w18 zh">中</span>
    <div class="tc w34"><svg class="t16 s18" viewBox="0 0 18 18"><path d="M3 1h14l-2 16H1z" fill="#e8521f"/><path d="M13 5H7v4h5v4H5" fill="none" stroke="#fff" stroke-width="2"/></svg></div>
    <div class="tc w76 clock"><span>7:50</span><span>2018/8/27</span></div>
    <div class="tc w40 notif"><svg class="t16 s18" viewBox="0 0 16 16"><path d="M1 1h14v11H9l-3 3v-3H1z" fill="#fff"/><path d="M3 4h10M3 6.500h10M3 9h7" stroke="#111"/></svg><b class="badge">4</b></div>
  </div>

  <div class="ball"><span>65</span></div>
  <div class="netw">
    <div class="netw-c"><svg><use href="#wifi"/></svg></div>
    <div class="netw-t">
      <span class="nl"><svg viewBox="0 0 10 14"><path d="M3 1v10M0.500 8L3 12l2.500-4" fill="none" stroke="#f07f1a" stroke-width="1.600"/><path d="M7 13V3M4.500 6L7 2l2.500 4" fill="none" stroke="#29c26b" stroke-width="1.600"/></svg>0.00K/s</span>
      <span class="nl"><svg viewBox="0 0 10 14"><path d="M3 1h4v2h2v10H1V3h2z" fill="#29c26b"/></svg>0</span>
    </div>
  </div>
</div>
</body>
</html>
```
FILE: styles.css
```css
* { box-sizing: border-box; }
html, body { margin: 0; padding: 0; height: 100%; overflow: hidden; }
body { background: #f0f0f0; font: 12px/1.2 "Noto Sans CJK SC", "Liberation Sans", sans-serif; color: #111; }
i, b { font-style: normal; font-weight: normal; }
.sprite { position: absolute; width: 0; height: 0; }
.app { position: relative; width: 1366px; height: 768px; display: flex; flex-direction: column; overflow: hidden; }
.i { width: 16px; height: 16px; flex: none; display: block; }
.m { font-family: "Liberation Mono", "Noto Sans CJK SC", monospace; font-size: 11px; letter-spacing: -.6px; }
.off { color: #9a9a9a; }

/* title */
.title { height: 23px; background: #fff; display: flex; align-items: center; padding-left: 2px; flex: none; }
.ti-logo { width: 16px; height: 16px; margin-right: 5px; }
.ti-text { font-size: 13px; color: #6f6f6f; white-space: nowrap; letter-spacing: -.22px; }
.win { margin-left: auto; display: flex; gap: 33px; padding-right: 19px; }
.win svg { width: 12px; height: 12px; }

/* menu */
.menu { height: 29px; background: #f6f6f6; display: flex; align-items: center; gap: 10.600px; padding-left: 7px; flex: none; white-space: nowrap; }
.mg { gap: 2px; margin-left: -1px; }
.bot { margin-left: -8px; }
.news { width: 187px; height: 26px; background: #fbfbfb; color: #5a2c00; display: flex; align-items: center; justify-content: center; margin-left: -4px; }
.acct { margin-left: -4px; letter-spacing: .3px; }
.bell { margin-left: -3px; }
.more { margin-left: auto; padding-right: 5px; font-size: 13px; line-height: 1; transform: translateY(-2px); }
.car { width: 6px; height: 16px; flex: none; position: relative; }
.car::after { content: ""; position: absolute; left: 0; top: 7px; border: 3px solid transparent; border-top: 3px solid #222; border-bottom: 0; }
.car.tight { margin: 0 -3px; }
.car.pull { margin-left: -5px; }

/* toolbars */
.tb { display: flex; align-items: center; gap: 7px; background: #fafafa; white-space: nowrap; }
.it { display: flex; align-items: center; gap: 4px; white-space: nowrap; }
.sep { width: 1px; height: 20px; background: #c4c4c4; margin: 0 -1px; flex: none; }
.grp { width: 2px; height: 17px; flex: none; background: repeating-linear-gradient(#aaa 0 2px, transparent 2px 4px); }
.bar1 { height: 32px; display: flex; gap: 2px; padding-top: 2px; flex: none; }
.bar1 .tb { height: 26px; }
.g1 { width: 148px; margin-left: 2px; padding-left: 2px; }
.g2 { width: 549px; padding-left: 4px; }
.g3 { flex: 1; padding-left: 4px; }

.main { display: flex; flex: none; height: 624px; }
.side { width: 165px; flex: none; display: flex; flex-direction: column; padding-left: 1px; }
.side-h { height: 15px; border: 1px solid #8e8e8e; background: #fff; display: flex; align-items: center; font-size: 13px; line-height: 13px; position: relative; margin-bottom: 1px; }
.side-pin { position: absolute; left: 134px; top: 1px; width: 10px; height: 12px; }
.side-x { position: absolute; left: 150px; font-size: 14px; }
.nav { height: 22px; flex: none; border: 1px solid #aaa; background: #f0f0f0; font: 12px/1 "Noto Sans CJK SC", sans-serif; color: #111; padding: 1px 0 0; border-top-color: #999; width: 164px; }
.pm { height: 27px; flex: none; background: #fafafa; border: 1px solid #ddd; padding: 6px 0 0 6px; overflow: hidden; }
.pm svg { width: 42px; height: 16px; display: block; }
.tree { height: 489px; flex: none; margin-left: 1px; width: 161px; border: 1px solid #999; background: #fff; display: flex; overflow: hidden; position: relative; }
.tree-body { flex: 1; overflow: hidden; padding-top: 2px; position: relative; }
.r { height: 16px; display: flex; align-items: center; white-space: nowrap; font-size: 12px; position: relative; }
.r .m { font-size: 12px; letter-spacing: -1.200px; transform: translateY(1px); display: inline-block; }
.f { padding-left: 6px; }
.f .i { margin-right: 4px; }
.k { padding-left: 43px; }
.k .i { margin-right: 4px; }
.k::before { content: ""; position: absolute; left: 32px; width: 11px; top: 8px; border-top: 1px dotted #666; }
.kids { position: relative; }
.kids::before { content: ""; position: absolute; left: 32px; top: -5px; bottom: 8px; border-left: 1px dotted #666; }
.kids::after { content: ""; position: absolute; left: 12px; top: -5px; bottom: 0; border-left: 1px dotted #666; }
.chev { width: 8px; height: 8px; flex: none; position: relative; border-right: 2px solid #a8a8a8; border-top: 2px solid #a8a8a8; transform: rotate(45deg) scale(.8); margin-right: 1px; }
.chev.dn { transform: translateY(-2px) rotate(135deg) scale(.8); border-color: #555; }
.dot { width: 6px; flex: none; border-top: 1px dotted #666; margin: 0 2px; }
.hl { background: #d5d5d5; padding: 0 4px; margin-left: -4px; height: 16px; display: flex; align-items: center; }
.tree-sb { width: 15px; margin-right: 2px; flex: none; display: flex; flex-direction: column; background: #f0f0f0; }
.ar { display: block; position: relative; flex: none; width: 15px; height: 16px; }
.ar::after { content: ""; position: absolute; left: 4px; top: 5px; width: 6px; height: 6px; border-left: 1.500px solid #555; border-top: 1.500px solid #555; transform: rotate(45deg); }
.ar.down::after { transform: rotate(225deg); top: 3px; }
.ar.lf::after { transform: rotate(-45deg); left: 5px; }
.ar.rt::after { transform: rotate(135deg); left: 3px; }
.thumb { height: 436px; flex: none; background: #cdcdcd; }
.tree-sb .ar.down { margin-top: auto; }

/* work area */
.work { flex: 1; margin-left: 5px; min-width: 0; display: flex; flex-direction: column; }
.row { display: flex; flex: none; gap: 2px; }
.r2 { height: 27px; }
.r2 .tb { height: 25px; margin-top: 1px; }
.fill1 { width: 791px; padding-left: 2px; }
.r3 { height: 28px; }
.r3 .tb { height: 26px; }
.t3a { width: 639px; padding-left: 2px; }
.t3b { width: 422px; padding-left: 2px; }
.sels { display: flex; gap: 6px; margin-left: -2px; }
.sel { height: 24px; background: #fff; display: flex; align-items: center; padding-left: 2px; position: relative; font-size: 12px; }
.sel .car { position: absolute; right: 4px; top: 4px; }
.w54 { width: 54px; } .w66 { width: 66px; } .w68 { width: 68px; } .w46 { width: 46px; }
.gap84 { width: 109px; flex: none; }
.r4 { height: 29px; }
.r4 .tb { height: 27px; }
.t4a { width: 1165px; padding-left: 2px; }
.t4b { width: 25px; padding-left: 4px; background: #f7f7f7; }
.blank { width: 56px; height: 24px; background: #fff; position: relative; margin-left: -6px; flex: none; }
.blank .car { position: absolute; right: 4px; top: 4px; }
.act { border: 1px solid #0078d7; background: #e5f1fb; padding: 2px 3px; margin-left: -4px; height: 24px; }

/* canvas */
.canvas { height: 305px; flex: none; position: relative; background: #000; overflow: hidden; }
.cad { display: block; width: 1196px; height: 305px; }
.cad text { font-family: "Liberation Sans", sans-serif; }
.k0 { fill: #000; }
.hat { fill: url(#hatch); }
.ghost { fill: none; stroke: #7a7a7a; }
.y1 { fill: #ffff00; }
.y2 { fill: #f0f000; }
.gr { fill: #00e600; }
.pu { fill: #7f00ef; }
.cy { fill: #00f6f6; }
.bl { fill: #0078f0; }
.dx { fill: #fff; font-size: 57px; mix-blend-mode: difference; }
.wh { stroke: #fff; fill: none; }
.red { stroke: #ff0000; fill: none; }
.dg { stroke: #0a8a0a; fill: none; }
.axis { fill: none; stroke: #0a7a0a; }
.lab { fill: #999; font-size: 13px; text-anchor: middle; }
.arg { stroke: #00f000; stroke-width: 3; }
.agf { fill: #00f000; }
.arr { stroke: #ff0000; stroke-width: 3; }
.arf { fill: #ff0000; }
.pop { position: absolute; left: 115px; top: 152px; width: 120px; height: 32px; background: #fff; }
.pop-t { height: 14px; position: relative; font-size: 12px; line-height: 14px; padding-left: 12px; }
.pop-x { position: absolute; right: 0; top: 2px; width: 12px; height: 12px; border: 1px solid #aaa; background: #e6e6e6; font-size: 10px; font-weight: bold; line-height: 10px; text-align: center; }
.pop-i { height: 18px; border: 1px solid #0a6ab8; position: relative; }
.pop-c { position: absolute; right: 6px; top: 3px; width: 6px; height: 6px; border-right: 1px solid #666; border-bottom: 1px solid #666; transform: rotate(45deg); }

/* snap */
.snapwrap { height: 32px; flex: none; padding: 2px 0 0 212px; }
.snap { width: 675px; height: 25px; padding-left: 2px; gap: 5px; }
.pair { display: flex; }
.pr { border: 1px solid #0078d7; background: #e5f1fb; height: 22px; width: 51px; padding-left: 1px; gap: 3px; }
.pr + .pr { margin-left: -1px; }
.xl { margin-left: 9px; }
.mm { margin-left: -3px; }
.rt { margin-left: 3px; }
.num { height: 22px; border: 1px solid #a0a0a0; background: #fafafa; color: #777; display: flex; align-items: center; justify-content: flex-end; padding-right: 18px; font-size: 12px; position: relative; }
.w57 { width: 57px; } .w68 { width: 68px; }
.spin { position: absolute; right: 4px; top: 3px; width: 8px; height: 14px; }
.spin::before, .spin::after { content: ""; position: absolute; left: 0; border: 3px solid transparent; }
.spin::before { top: -2px; border-bottom-color: #555; }
.spin::after { bottom: -2px; border-top-color: #555; }
.chk { width: 12px; height: 12px; border: 1px solid #777; background: #fff; flex: none; margin-left: -2px; }

/* lower */
.lower { flex: 1; display: flex; min-height: 0; }
.gripcol { width: 12px; flex: none; background: repeating-linear-gradient(#d8d8d8 0 2px, transparent 2px 5px); position: relative; margin-top: 3px; }
.gx { position: absolute; left: 0; top: 0; width: 10px; height: 10px; background: linear-gradient(45deg, #a06060, #ddd); border: 1px solid #666; }
.lowmain { flex: 1; min-width: 0; display: flex; flex-direction: column; }
.gtb { height: 28px; flex: none; background: #fafafa; display: flex; align-items: center; padding-left: 5px; gap: 10px; white-space: nowrap; }
.gtb .it { gap: 3px; margin-right: -2px; }
.frame { height: 172px; flex: none; margin-right: 2px; border: 1px solid #a0a0a0; background: #fff; position: relative; display: flex; flex-direction: column; padding-left: 1px; }
.fr-top { display: flex; height: 154px; flex: none; }
.view { flex: 1; overflow: hidden; min-width: 0; padding-top: 1px; }
.grid { border-collapse: collapse; table-layout: fixed; width: 1270px; font-size: 12px; }
.c30 { width: 30px; } .c42 { width: 42px; } .c61 { width: 61px; } .c41 { width: 41px; } .c80 { width: 80px; } .c81 { width: 81px; } .c82 { width: 82px; }
.grid th, .grid td { border: 1px solid #c8c8c8; padding: 0; height: 19px; overflow: hidden; white-space: nowrap; font-weight: normal; }
.grid td { text-align: left; padding: 2px 0 0 1px; font-family: "Liberation Mono", "Noto Sans CJK SC", monospace; font-size: 12px; letter-spacing: -1.200px; }
.grid td u { text-decoration: none; letter-spacing: 0; font-size: 12px; margin: 0 .5px; }
.grid thead th { background: linear-gradient(#fff, #eee); font-size: 12px; color: #222; }
.grid thead .m { font-size: 10px; }
.h1 th { height: 18px; }
.grid thead th.gold { background: linear-gradient(#f9e4ae, #f3c264); color: #6a0a6a; font-size: 12px; }
.grid thead th.lft { text-align: left; padding-left: 8px; }
.grid tbody th { background: linear-gradient(#fff, #eee); font-family: "Liberation Mono", monospace; font-size: 12px; padding-top: 1px; }
.sel-row td { background: #a6caf0; }
.grid tbody .sel-row th { background: #ffd992; color: #7a1010; }
.grid td.first { border: 3px solid #808080; background: #8fbce9; position: relative; overflow: visible; padding: 0; }
.hdl { position: absolute; right: -5px; bottom: -5px; width: 6px; height: 6px; background: #fff; border: 1px solid #666; }
.grid td.sp { border-right: 1px solid #000; }
.vsb { width: 17px; flex: none; background: #f0f0f0; display: flex; flex-direction: column; }
.vthumb { height: 42px; background: #cdcdcd; flex: none; }
.vsb .ar.down { margin-top: auto; }
.hsb { height: 16px; flex: none; background: #f0f0f0; display: flex; }
.hthumb { width: 540px; background: #cdcdcd; flex: none; }
.hsb .ar.rt { margin-left: auto; margin-right: 2px; }
.oval { position: absolute; left: 421px; top: 11px; width: 146px; height: 34px; pointer-events: none; }
.oval ellipse { fill: none; stroke: #f00; stroke-width: 6; }

/* status */
.status { height: 20px; flex: none; display: flex; gap: 2px; padding-top: 0; }
.st { height: 20px; background: #fcfcfc; border: 1px solid #d0d0d0; padding-left: 1px; display: flex; align-items: center; white-space: nowrap; font-size: 12px; }
.w148 { width: 148px; } .w78 { width: 78px; } .w98 { width: 98px; } .w48 { width: 48px; }
.hint { width: 913px; letter-spacing: .06px; }
.fps { width: 70px; }
.st.m { font-size: 11px; letter-spacing: -.6px; }

/* taskbar */
.taskbar { height: 40px; flex: none; background: #0d1b20; display: flex; align-items: stretch; color: #fff; }
.start { width: 48px; background: #000; display: flex; align-items: center; justify-content: center; }
.start svg { width: 16px; height: 16px; }
.search { width: 344px; background: #f2f2f2; display: flex; align-items: center; color: #333; font-size: 14px; position: relative; padding-left: 10px; }
.cort { width: 18px; height: 18px; border: 3px solid #111; border-radius: 50%; margin-right: 12px; flex: none; }
.mic { position: absolute; left: 317px; top: 9px; width: 12px; height: 21px; }
.cell { width: 50px; flex: none; display: flex; align-items: center; justify-content: center; position: relative; }
.cell svg { width: 22px; height: 22px; }
.c2 { margin-left: 2px; }
.on::after { content: ""; position: absolute; left: 2px; right: 2px; bottom: 0; height: 2px; background: #76b9ed; }
.tsep { width: 1px; height: 20px; align-self: center; background: #555; flex: none; margin: 0 11px 0 9px; }
.tpanel { width: 17px; margin-left: 31px; flex: none; background: #efefef; display: flex; flex-direction: column; justify-content: space-around; padding: 3px 0; }
.tpanel .ar { width: 17px; }
.tpanel .ar::after { left: 5px; }
.tsep.s2 { margin: 0 0 0 13px; }
.tc { flex: none; display: flex; align-items: center; justify-content: center; position: relative; }
.w40 { width: 40px; } .w86 { width: 86px; } .w26 { width: 26px; } .w30 { width: 30px; } .w18 { width: 18px; } .w20 { width: 20px; } .w22 { width: 22px; } .w38 { width: 38px; } .w34 { width: 34px; } .w76 { width: 76px; }
.tc.w48 { width: 48px; }
.dim { color: #ddd; font-size: 12px; }
.t16 { width: 16px; height: 16px; }
.s18 { width: 18px; height: 18px; }
.t22 { width: 22px; height: 18px; }
.kb { width: 24px; height: 16px; }
.cpu, .clock { flex-direction: column; line-height: 18px; font-size: 12px; }
.clock { font-size: 12.500px; }
.lime { color: #7cc522; }
.zh { font-size: 14px; }
.badge { position: absolute; right: 0; bottom: 0; width: 17px; height: 17px; border-radius: 50%; background: #444; border: 1px solid #ccc; color: #fff; font-size: 12px; line-height: 15px; text-align: center; }

/* overlays */
.ball { position: absolute; left: 857px; top: -28px; width: 46px; height: 46px; border-radius: 50%; background: #35c162; border: 2px solid #7d9c7d; box-shadow: 0 2px 5px rgba(0,0,0,.4); color: #fff; font-weight: bold; font-size: 12px; text-align: center; padding-top: 26px; line-height: 14px; }
.netw { position: absolute; left: 1075px; top: 83px; width: 120px; height: 50px; border-radius: 25px; background: #fff; border: 1px solid #ddd; box-shadow: 0 1px 5px rgba(0,0,0,.35); display: flex; align-items: center; padding-left: 5px; gap: 6px; }
.netw-c { width: 38px; height: 38px; border-radius: 50%; background: #28c76f; color: #fff; display: flex; align-items: center; justify-content: center; flex: none; }
.netw-c svg { width: 28px; height: 24px; }
.netw-t { display: flex; flex-direction: column; gap: 5px; color: #777; font-size: 11px; }
.nl { display: flex; align-items: center; gap: 4px; }
.nl svg { width: 10px; height: 14px; }
```
